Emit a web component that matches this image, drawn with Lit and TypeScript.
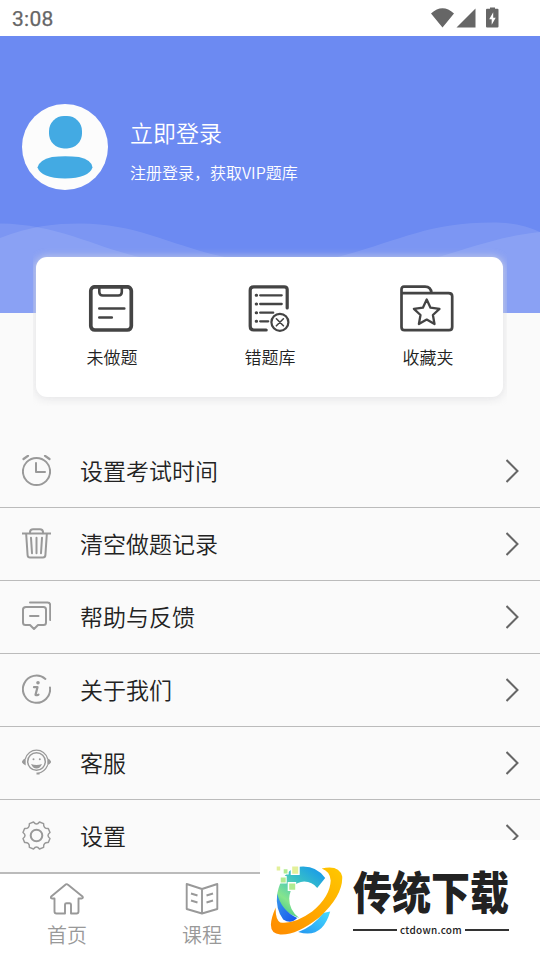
import { LitElement, html, css, svg } from "lit";
import { customElement } from "lit/decorators.js";

const rowIcons = {
  clock: svg`<circle cx="14.5" cy="16.5" r="13.6" stroke-width="2"/><path d="M14 8V17h9" stroke-width="2"/><path d="M1.5 4 6 .8M23 .8l4.500 3.200" stroke-width="2.200"/>`,
  trash: svg`<path d="M0 5.500h29" stroke-width="2"/><path d="M8 5.200V3.700Q8.500 1.200 11 1.200h7q2.500 0 3 2.500v1.500M4.200 6.200 5.600 27.200q.2 2.300 2.400 2.300h13q2.200 0 2.400-2.300L24.800 6.200M9 9.700l1 15.500M14.500 9.700v15.500M20 9.700l-1 15.500" stroke-width="2"/>`,
  chat: svg`<path d="M4 6h17.500q2.500 0 2.500 2.500v13q0 2.500-2.500 2.500H16l-4 4-4-4H3.500Q1 24 1 21.500v-13Q1 6 4 6zM8 15h8.500" stroke-width="2"/><path d="M8 1.500h17.500q2.700 0 2.700 2.700V19" stroke-width="2"/>`,
  info: svg`<path d="M28 13.500a13.600 13.600 0 1 1-4.600-8.600" stroke-width="2"/><circle cx="16" cy="8.700" r="1.800" fill="#999" stroke="none"/><path d="M12 13.200h3.500l-2 7.500q0 1 3 0" stroke-width="2.200"/>`,
  service: svg`<circle cx="14.500" cy="14.500" r="8.800" stroke-width="1.500"/><path d="M3.500 11.500a11.400 11.400 0 0 1 22 0M25.500 18.500q-2.500 6-9.500 8" stroke-width="1.200"/><path d="M3.700 11q-7.500 4 0 7.500zM25.300 11q7.500 4 0 7.500zM14.500 25.500h3v2h-3zM9 17q5.500 2 11 0-2 4.500-5.500 4.500T9 17z" fill="#999" stroke="none"/><circle cx="11.500" cy="12.300" r="1" fill="#999" stroke="none"/><circle cx="17.800" cy="12.300" r="1" fill="#999" stroke="none"/>`,
  gear: svg`<circle cx="14.500" cy="15.500" r="5.800" stroke-width="2"/><path transform="translate(0 .5)" d="M11.500 1.500Q14.500 5.500 17.500 1.500L21.600 3.100Q21.300 8.300 26.300 8L28 12Q24 15 28 18L26.300 22Q21.300 21.700 21.600 26.900L17.500 28.500Q14.500 24.500 11.500 28.500L7.400 26.900Q7.700 21.700 2.600 22L1 18Q5 15 1 12L2.600 8Q7.700 8.300 7.400 3.100Z" stroke-width="1.500"/>`,
};

const rows = [
  { icon: rowIcons.clock, label: "设置考试时间" },
  { icon: rowIcons.trash, label: "清空做题记录" },
  { icon: rowIcons.chat, label: "帮助与反馈" },
  { icon: rowIcons.info, label: "关于我们" },
  { icon: rowIcons.service, label: "客服" },
  { icon: rowIcons.gear, label: "设置" },
];

const shortcuts = [
  {
    label: "未做题",
    icon: svg`<rect x="6.800" y="1.800" width="40.500" height="43.200" rx="4" stroke-width="3.700"/><path d="M15.300 3v4q0 3.500 3.500 3.500h15.500q3.500 0 3.500-3.500V3M15.300 23.500h25M15.300 32.500h12.500" stroke-width="2.600"/>`,
  },
  {
    label: "错题库",
    icon: svg`<g transform="translate(.7 0)"><path d="M44.500 23V4.500Q44.500 1.800 41.500 1.800H11Q7.500 1.800 7.500 5.300v36q0 3.700 3.500 3.700h12.500" stroke-width="3.200"/><path d="M17.500 10.300h21.500M17.500 19h21.500M17.500 27.700h13M17.500 36.300h8" stroke-width="2.300"/><path d="M13.500 10.300h.4M13.500 19h.4M13.500 27.700h.4M13.500 36.300h.4" stroke-width="3"/><circle cx="37.200" cy="37.300" r="8.500" stroke-width="2.200"/><path d="m33.700 33.800 7 7m0-7-7 7" stroke-width="1.600"/></g>`,
  },
  {
    label: "收藏夹",
    icon: svg`<path d="M1.500 42V4.500Q1.500 1.700 4 1.700h21q6 0 6.500 6.500H48.500q3.700 0 3.700 3v30.800q0 3.200-3.200 3.200H4.500q-3 0-3-3.200zM2 8.200h30" stroke-width="2.700"/><path d="m26.700 14.500 3.800 8.200 9 1.200-6.600 6.100 1.600 9-7.800-4.400-7.800 4.400 1.600-9-6.600-6.100 9-1.200z" stroke-width="2.300"/>`,
  },
];

const tabs = [
  { label: "首页", icon: svg`<path d="M16 1.300Q17 .8 18 1.800L32.500 13.500q1 1.700-1 2h-3v13q0 2-2 2h-5.500V21.500q0-1.300-1.500-1.300h-3q-1.500 0-1.500 1.300v9H6.500q-2 0-2-2v-13H2.200q-2.200-.3-1-2z" stroke-width="1.900"/>` },
  { label: "课程", icon: svg`<path d="M1.700 1 17 6l15.300-5V26L17 30.500 1.700 26zM17 6v24.500M6 10.500l6.500 2M6 17.500l6.500 2M28 10.500l-6.500 2M28 17.500l-6.500 2" stroke-width="1.900"/>` },
];

@customElement("app-root")
export class AppRoot extends LitElement {
  static styles = css`
    :host {
      display: flex;
      flex-direction: column;
      position: relative;
      width: 540px;
      height: 960px;
      overflow: hidden;
      background: #fafafa;
      color: #222;
      font-family: "Noto Sans CJK SC", sans-serif;
      font-weight: 350;
    }
    * { box-sizing: border-box; }
    svg { display: block; fill: none; flex: none; }
    .status {
      flex: none;
      height: 36px;
      background: #fff;
      display: flex;
      align-items: center;
      justify-content: space-between;
      padding: 0 41px 0 12px;
      color: #666;
      font: 400 21px/36px Roboto, sans-serif;
      letter-spacing: 0.300px;
      -webkit-text-stroke: 0.250px #666;
    }
    .status span { padding-top: 2px; }
    .hero {
      flex: none;
      height: 277px;
      position: relative;
      background: #6c8af2;
      color: #fff;
    }
    .waves { position: absolute; inset: auto 0 0 0; }
    .profile {
      position: relative;
      display: flex;
      gap: 22px;
      padding: 68px 22px 0;
    }
    .names { padding-top: 11px; }
    .login { font-size: 23px; line-height: 34px; }
    .hint { font-size: 16px; line-height: 24px; margin-top: 11px; }
    .card {
      flex: none;
      position: relative;
      width: 474px;
      height: 158px;
      margin: -65px 0 0 33px;
      padding: 9px 3.600px 9px 3.400px;
      overflow: hidden;
    }
    .panel {
      height: 140px;
      border-radius: 11px;
      background: #fff;
      box-shadow: 0 1px 8px 1px rgba(222, 222, 224, 0.75);
      display: grid;
      grid-template-columns: repeat(3, 158px);
      justify-content: center;
      padding-top: 28px;
    }
    .shortcut {
      display: flex;
      flex-direction: column;
      align-items: center;
      gap: 12px;
      font-size: 17px;
      line-height: 25px;
    }
    .shortcut svg { stroke: #444; stroke-linecap: round; stroke-linejoin: round; margin-right: 2px; }
    .list { margin-top: 29px; flex: none; }
    .row {
      height: 73px;
      display: flex;
      align-items: center;
      padding: 0 21px 0 22px;
      border-bottom: 1px solid #bbb;
      font-size: 23px;
    }
    .row:last-child { border-bottom: 2px solid #bbb; height: 74px; }
    .row .icon { stroke: #999; stroke-linejoin: round; stroke-linecap: round; }
    .name { margin: 0 0 2px 29px; flex: 1; }
    .chevron { stroke: #666; stroke-width: 2; }
    .tabs {
      flex: 1;
      background: #fff;
      display: grid;
      grid-template-columns: repeat(4, 135px);
    }
    .tab {
      display: flex;
      flex-direction: column;
      align-items: center;
      padding: 9px 1px 0 0;
      gap: 5px;
      color: #999;
      font-size: 20px;
      line-height: 29px;
    }
    .tab svg { stroke: #999; stroke-linejoin: round; }
    .brand {
      position: absolute;
      right: 0;
      bottom: 0;
      width: 280px;
      height: 120px;
      background: #fff;
      display: flex;
      padding: 24px 0 0 9px;
      color: #222;
    }
    .words { width: 156px; margin-left: 7px; }
    .title {
      font-size: 39px;
      font-weight: 900;
      line-height: 52px;
      white-space: nowrap;
      transform: scaleY(1.170);
    }
    .domain {
      display: flex;
      align-items: center;
      gap: 3px;
      font: 500 10px/14px "Noto Sans CJK SC", sans-serif;
      letter-spacing: 0.300px;
      margin-top: 7px;
    }
    .domain::before, .domain::after {
      content: "";
      flex: 1;
      height: 2px;
      background: #333;
    }
  `;

  render() {
    return html`
      <div class="status">
        <span>3:08</span>
        <svg width="68" height="22" viewBox="0 0 68 22">
          <path fill="#666" d="M0 6.500Q11.500-3.800 23 6.500L11.500 20.500zM25.500 20.500 44.500 1.500v19z" />
          <path fill="#666" d="M56.500 1.800h2.500V.5h5v1.300h2.500q1 0 1 1v16.700q0 1-1 1H56q-1 0-1-1V2.800q0-1 1-1z" />
          <path fill="#fff" d="m62.200 5.300-4 7h2.500v5.400l4-7h-2.500z" />
        </svg>
      </div>
      <div class="hero">
        <svg class="waves" width="540" height="93" viewBox="0 0 540 93">
          <g fill="#fff">
            <path fill-opacity=".11" d="M0 3.500C60 4 100 30 145 38C240 63 350 59 425 41C470 28 500 16 540 12V93H0z" />
            <path fill-opacity=".11" d="M0 18C30 6 55 3.500 80 3.500C135 3.500 168 24 220 36C260 45 305 46 345 35C400 20 430 2.500 492 2.500C512 2.500 527 6 540 12V93H0z" />
          </g>
        </svg>
        <div class="profile">
          <svg width="86" height="86" viewBox="0 0 86 86">
            <circle cx="43" cy="43" r="43" fill="#fcfcfc" />
            <rect x="27" y="12" width="33" height="32.500" rx="15" fill="#43aae3" />
            <path d="M30 53Q43 51.500 57 53Q70 56 70.500 63.500Q67 74 43 74.500Q19 74 15.500 63.500Q17 56 30 53z" fill="#43aae3" />
          </svg>
          <div class="names">
            <div class="login">立即登录</div>
            <div class="hint">注册登录，获取VIP题库</div>
          </div>
        </div>
      </div>
      <div class="card">
        <div class="panel">
          ${shortcuts.map((s) => html`<div class="shortcut">
            <svg width="54" height="47" viewBox="0 0 54 47">${s.icon}</svg>
            <span>${s.label}</span>
          </div>`)}
        </div>
      </div>
      <div class="list">
        ${rows.map((r) => html`<div class="row">
          <svg class="icon" width="29" height="32" viewBox="0 0 29 32">${r.icon}</svg>
          <span class="name">${r.label}</span>
          <svg class="chevron" width="13" height="24" viewBox="0 0 13 24"><path d="M.5 1l11 11L.5 23" /></svg>
        </div>`)}
      </div>
      <div class="tabs">
        ${tabs.map((t) => html`<div class="tab">
          <svg width="34" height="32" viewBox="0 0 34 32">${t.icon}</svg>
          <span>${t.label}</span>
        </div>`)}
      </div>
      <div class="brand">
        <svg width="77" height="72" viewBox="0 0 77 72">
          <defs>
            <linearGradient id="c" gradientUnits="userSpaceOnUse" x1="52" y1="8" x2="20" y2="50">
              <stop offset="0" stop-color="#1c9ee6" /><stop offset=".35" stop-color="#37bfc8" /><stop offset=".8" stop-color="#86e58c" /><stop offset="1" stop-color="#55cf8b" />
            </linearGradient>
            <linearGradient id="b" x1="0" y1="0" x2="1" y2="1">
              <stop offset="0" stop-color="#3a9bea" /><stop offset="1" stop-color="#1652ee" />
            </linearGradient>
            <linearGradient id="s" x1="0" y1="1" x2="1" y2="0">
              <stop offset="0" stop-color="#2496f0" /><stop offset="1" stop-color="#46dcff" />
            </linearGradient>
            <linearGradient id="o" x1="0" y1="1" x2="1" y2="0">
              <stop offset="0" stop-color="#ff8a00" /><stop offset="1" stop-color="#ffc800" />
            </linearGradient>
          </defs>
          <g transform="translate(-.8 .5)">
            <path d="M57 13.500Q49 2 35 2Q20 2 12 19Q8 29 9 36Q16 49 31 53.500Q21 46 21 34Q22 18 36 17Q44 17 49 23.500z" fill="url(#c)" />
            <path d="M9 29Q13 46 29 53.500Q23 60 15 55Q7 44 9 29z" fill="url(#b)" />
            <path d="M62 47L55 48.500Q45 62 30 67.500Q54 75 62 47z" fill="url(#s)" />
            <path d="M53.500 4Q71 0 74 12Q75 31 51 53Q28 71 12 70Q-4 69 7.500 43Q7 55 12 58Q26 60 44 47Q62 32 62.500 16Q62 7 53.500 4z" fill="url(#o)" />
            <g fill="#fff"><path d="M22.500 0h9v10.500h-9zM14.500 3.500h6v6.500h-6zM11 11.500h7.500V19H11zM19.500 17.500h8.500v9h-8.500z" /></g>
            <path d="M8.500 2h3.500v4H8.500zM24 2h6v7.200h-6z" fill="#e3f09a" />
            <path d="M15.500 4.700h3.800V9h-3.800zM12.500 13h5v5h-5zM21 19h6v6.200h-6z" fill="#b1eb91" />
          </g>
        </svg>
        <div class="words">
          <div class="title">传统下载</div>
          <div class="domain">ctdown.com</div>
        </div>
      </div>
    `;
  }
}
